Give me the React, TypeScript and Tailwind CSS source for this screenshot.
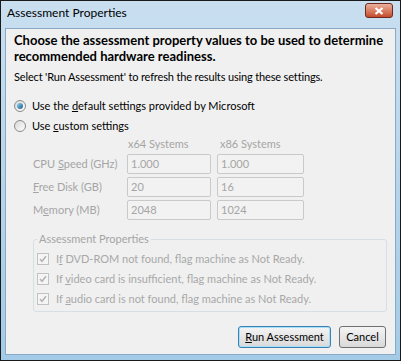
import { ReactNode } from 'react';

const font = { fontFamily: 'Lato, "Noto Sans", sans-serif' };

const Radio = ({ checked, children }: { checked?: boolean; children: ReactNode }) => (
  <div className="flex items-center gap-[6px] h-[20px]">
    <span className="w-[12px] h-[12px] rounded-full border border-[#8a8a8a] bg-gradient-to-br from-[#d8d8d8] to-[#ffffff] flex items-center justify-center">
      {checked && (
        <span className="w-[6px] h-[6px] rounded-full bg-gradient-to-br from-[#8ad9f8] to-[#1b5a8c]" />
      )}
    </span>
    <span className="text-[11px] text-black">{children}</span>
  </div>
);

const Field = ({ value }: { value: string }) => (
  <div className="h-[20px] border border-[#c9c9c9] rounded-[2px] bg-[#f2f2f2] px-[3px] text-[11px] leading-[18px] text-[#a5a5a5]">
    {value}
  </div>
);

const Check = ({ children }: { children: ReactNode }) => (
  <div className="flex items-center gap-[7px] h-[20px]">
    <span className="w-[12px] h-[12px] border border-[#c2c2c2] bg-[#f5f5f5] flex items-center justify-center">
      <svg width="8" height="8" viewBox="0 0 8 8">
        <path d="M1 4 L3 6.3 L7 1.2" fill="none" stroke="#b3b3b3" strokeWidth="1.5" />
      </svg>
    </span>
    <span className="text-[11px] text-[#a8a8a8] whitespace-nowrap">{children}</span>
  </div>
);

export default function App() {
  return (
    <div style={font} className="w-[401px] h-[361px] bg-[#1a1a1a] p-[1px]">
      <div className="w-full h-full flex flex-col bg-gradient-to-b from-[#c9dff0] to-[#a3cbe7] px-[4px] pb-[5px]">
        <div className="h-[27px] flex justify-between pl-[2px] pr-[3px]">
          <span className="text-[12px] leading-[24px] text-black">Assessment Properties</span>
          <div className="w-[28px] h-[15px] mt-[2px] rounded-[3px] border border-[#6d2a1e] bg-gradient-to-b from-[#eab09d] to-[#c44a2a] flex items-center justify-center">
            <svg width="10" height="8" viewBox="0 0 10 8">
              <path d="M1.5 1 L8.5 7 M8.5 1 L1.5 7" stroke="#ffffff" strokeWidth="2.2" />
            </svg>
          </div>
        </div>
        <div className="flex-1 bg-[#f0f0f0] border border-[#8aa9c5] flex flex-col pl-[8px] pr-[8px] pt-[3px]">
          <p className="text-[13px] font-bold leading-[16px] text-black">
            Choose the assessment property values to be used to determine recommended hardware readiness.
          </p>
          <p className="text-[11px] leading-[16px] mt-[5px] tracking-[-0.15px] text-black">
            Select 'Run Assessment' to refresh the results using these settings.
          </p>
          <div className="mt-[11px] flex flex-col">
            <Radio checked>
              Use the <u>d</u>efault settings provided by Microsoft
            </Radio>
            <Radio>
              Use <u>c</u>ustom settings
            </Radio>
          </div>
          <div className="grid grid-cols-[88px_84px_87px] gap-x-[6px] gap-y-[3px] ml-[19px] text-[11px] text-[#a5a5a5]">
            <span />
            <span className="leading-[15px] pl-[1px]">x64 Systems</span>
            <span className="leading-[15px] pl-[3px]">x86 Systems</span>
            <span className="leading-[20px] whitespace-nowrap">CPU <u>S</u>peed (GHz)</span>
            <Field value="1.000" />
            <Field value="1.000" />
            <span className="leading-[20px] whitespace-nowrap"><u>F</u>ree Disk (GB)</span>
            <Field value="20" />
            <Field value="16" />
            <span className="leading-[20px] whitespace-nowrap">M<u>e</u>mory (MB)</span>
            <Field value="2048" />
            <Field value="1024" />
          </div>
          <fieldset className="mt-[11px] ml-[19px] border border-[#d5dfe5] rounded-[3px] px-[3px] pt-[2px] pb-[2px]">
            <legend className="text-[11px] leading-[16px] text-[#a5a5a5] px-[2px]">Assessment Properties</legend>
            <Check>I<u>f</u> DVD-ROM not found, flag machine as Not Ready.</Check>
            <Check>If <u>v</u>ideo card is insufficient, flag machine as Not Ready.</Check>
            <Check>If <u>a</u>udio card is not found, flag machine as Not Ready.</Check>
          </fieldset>
          <div className="flex justify-end gap-[8px] mt-[14px] mr-[1px]">
            <button className="h-[22px] w-[93px] rounded-[3px] border border-[#3c7fb1] bg-gradient-to-b from-[#f4f4f4] to-[#d9d9d9] text-[11px] text-black shadow-[inset_0_0_0_1px_#a6e0f8]">
              <u>R</u>un Assessment
            </button>
            <button className="h-[22px] w-[47px] rounded-[3px] border border-[#707070] bg-gradient-to-b from-[#f4f4f4] to-[#d9d9d9] text-[11px] text-black">
              Cancel
            </button>
          </div>
        </div>
      </div>
    </div>
  );
}
